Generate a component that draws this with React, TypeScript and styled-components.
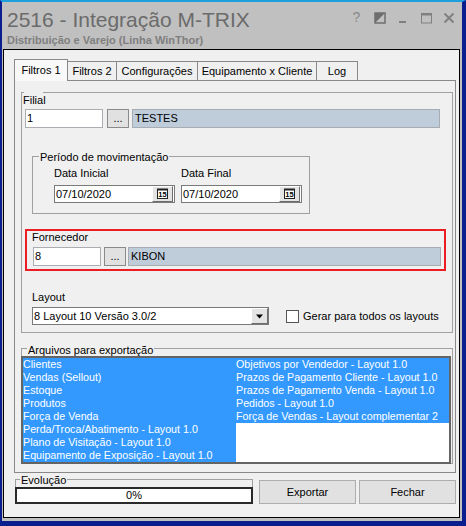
import React from 'react';
import styled, { createGlobalStyle } from 'styled-components';

const GlobalStyle = createGlobalStyle`
  html, body {
    margin: 0;
    padding: 0;
    background: #0b1e8e;
  }
  body {
    font-family: "Liberation Sans", Arial, sans-serif;
    font-size: 11px;
    color: #000;
  }
  * {
    box-sizing: border-box;
  }
`;

const Frame = styled.div`
  width: 466px;
  height: 526px;
  display: flex;
  flex-direction: column;
  background: #c0c0c0;
  border-style: solid;
  border-color: #0b1e8e;
  border-width: 0 4px 5px 2px;
  border-top: 2px solid #1c9fdb;
  padding: 0 2px 3px 1px;
`;

const TitleBar = styled.div`
  height: 47px;
  flex: none;
  display: flex;
  justify-content: space-between;
`;

const TitleBlock = styled.div`
  padding: 6px 0 0 4px;
`;

const Title = styled.div`
  font-size: 21px;
  line-height: 24px;
  color: #6b6b6b;
  white-space: nowrap;
`;

const Subtitle = styled.div`
  margin-top: 2px;
  font-size: 11px;
  font-weight: bold;
  line-height: 13px;
  color: #7f7f7f;
  white-space: nowrap;
`;

const Controls = styled.div`
  display: flex;
  padding-top: 9px;
`;

const ControlCell = styled.div`
  width: 23px;
  height: 13px;
  display: flex;
  align-items: center;
  justify-content: center;
  color: #8a8a8a;
  font-size: 14px;
  line-height: 13px;
`;

const Body = styled.div`
  flex: 1;
  display: flex;
  flex-direction: column;
  background: #f0f0f0;
  border: 1px solid #000;
  padding: 9px 3px 0 10px;
`;

const TabRow = styled.div`
  display: flex;
  align-items: flex-end;
  height: 21px;
`;

const Tab = styled.div<{ $w: number; $active?: boolean }>`
  position: relative;
  z-index: ${(p) => (p.$active ? 2 : 1)};
  width: ${(p) => p.$w}px;
  height: ${(p) => (p.$active ? 22 : 19)}px;
  margin-bottom: ${(p) => (p.$active ? -1 : 0)}px;
  display: flex;
  align-items: center;
  justify-content: center;
  line-height: 13px;
  white-space: nowrap;
  background: ${(p) => (p.$active ? '#f9f9f9' : '#f0f0f0')};
  border: 1px solid #898989;
  border-bottom: none;

  & + & {
    margin-left: -1px;
  }
`;

const Panel = styled.div`
  width: 442px;
  height: 393px;
  background: #f0f0f0;
  border: 1px solid #898989;
  padding: 0 1px 0 6px;
`;

const Group = styled.fieldset<{ $h?: number }>`
  margin: 11px 0 0 0;
  padding: 0;
  width: 432px;
  height: ${(p) => (p.$h ? `${p.$h}px` : 'auto')};
  border: 1px solid #a0a0a0;
  min-inline-size: 0;
`;

const GapLegend = styled.legend`
  width: 19px;
  height: 1px;
  margin-left: 2px;
  padding: 0;
`;

const Legend = styled.legend<{ $indent: number; $lift: number }>`
  margin-left: ${(p) => p.$indent}px;
  padding: ${(p) => p.$lift}px 1px 0 1px;
  font-size: 11px;
  line-height: 11px;
  white-space: nowrap;
`;

const Caption = styled.div<{ $top?: number; $left?: number }>`
  margin-top: ${(p) => p.$top ?? 0}px;
  margin-left: ${(p) => p.$left ?? 0}px;
  line-height: 13px;
  white-space: nowrap;
`;

const LookupRow = styled.div<{ $top: number; $left: number }>`
  display: flex;
  height: 19px;
  margin-top: ${(p) => p.$top}px;
  margin-left: ${(p) => p.$left}px;
`;

const CodeBox = styled.div<{ $w: number }>`
  width: ${(p) => p.$w}px;
  background: #fff;
  border: 1px solid #abadb3;
  padding-left: 1px;
  line-height: 17px;
`;

const DotsButton = styled.div<{ $gap: number }>`
  width: 22px;
  margin-left: ${(p) => p.$gap}px;
  background: #e1e1e1;
  border: 1px solid #8a8a8a;
  text-align: center;
  line-height: 17px;
`;

const DescBox = styled.div<{ $w: number; $gap: number }>`
  width: ${(p) => p.$w}px;
  margin-left: ${(p) => p.$gap}px;
  background: #bfcddb;
  border: 1px solid #a6acb2;
  padding-left: 2px;
  line-height: 17px;
`;

const PeriodSet = styled.fieldset`
  margin: 22px 0 0 10px;
  padding: 4px 0 10px 0;
  width: 278px;
  border: 1px solid #a0a0a0;
  min-inline-size: 0;
`;

const DateColumns = styled.div`
  display: flex;
  gap: 6px;
  padding-left: 21px;
`;

const DateField = styled.div`
  display: flex;
  flex-direction: column;
  gap: 5px;
`;

const DateBox = styled.div`
  width: 121px;
  height: 18px;
  display: flex;
  align-items: center;
  justify-content: space-between;
  background: #fff;
  border: 1px solid #7a7a7a;
  padding: 0 1px 0 1px;
  line-height: 16px;
`;

const RaisedButton = styled.div<{ $w: number }>`
  width: ${(p) => p.$w}px;
  height: 16px;
  display: flex;
  align-items: center;
  justify-content: center;
  background: #e4e4e4;
  border-style: solid;
  border-width: 1px;
  border-color: #fff #6d6d6d #6d6d6d #fff;
`;

const Highlight = styled.div`
  margin: 15px 0 0 3px;
  width: 421px;
  border: 2px solid #ec1c24;
  padding: 0 0 3px 5px;
`;

const LayoutRow = styled.div`
  display: flex;
  align-items: center;
  margin: 3px 0 0 10px;
`;

const SelectBox = styled.div`
  width: 237px;
  height: 18px;
  display: flex;
  align-items: center;
  justify-content: space-between;
  background: #fff;
  border: 1px solid #7a7a7a;
  padding-left: 1px;
  line-height: 16px;
`;

const CheckBox = styled.div`
  width: 13px;
  height: 13px;
  margin-left: 17px;
  background: #fff;
  border: 1px solid #555;
`;

const CheckLabel = styled.div`
  margin-left: 4px;
  line-height: 13px;
  white-space: nowrap;
`;

const FilesSet = styled.fieldset`
  margin: 8px 0 0 0;
  padding: 0;
  width: 432px;
  border: 1px solid #a0a0a0;
  min-inline-size: 0;
`;

const ListBox = styled.div`
  margin: 0 1px -1px -1px;
  display: grid;
  grid-template-columns: 213px 213px;
  grid-template-rows: repeat(8, 13px);
  grid-auto-flow: column;
  align-content: start;
  background: #fff;
  border: 2px solid #646464;
`;

const ListItem = styled.div`
  background: #3399ff;
  color: #fff;
  font-size: 10.7px;
  line-height: 13px;
  white-space: nowrap;
  overflow: hidden;
`;

const Footer = styled.div`
  display: flex;
  align-items: flex-end;
  margin-left: 1px;
`;

const ProgressSet = styled.fieldset`
  margin: 0;
  padding: 0;
  width: 238px;
  border: 1px solid #a0a0a0;
  min-inline-size: 0;
`;

const ProgressBar = styled.div`
  margin: 1px -1px -1px -1px;
  height: 17px;
  background: #fff;
  border: 2px solid #2a2a2a;
  text-align: center;
  line-height: 13px;
`;

const ActionButton = styled.div<{ $gap: number }>`
  width: 97px;
  height: 24px;
  margin-left: ${(p) => p.$gap}px;
  display: flex;
  align-items: center;
  justify-content: center;
  background: #e1e1e1;
  border: 1px solid #adadad;
`;

const tabs = [
  { label: 'Filtros 1', w: 54, active: true },
  { label: 'Filtros 2', w: 50 },
  { label: 'Configurações', w: 82 },
  { label: 'Equipamento x Cliente', w: 120 },
  { label: 'Log', w: 42 },
];

const exportFiles = [
  'Clientes',
  'Vendas (Sellout)',
  'Estoque',
  'Produtos',
  'Força de Venda',
  'Perda/Troca/Abatimento - Layout 1.0',
  'Plano de Visitação - Layout 1.0',
  'Equipamento de Exposição - Layout 1.0',
  'Objetivos por Vendedor - Layout 1.0',
  'Prazos de Pagamento Cliente - Layout 1.0',
  'Prazos de Pagamento Venda - Layout 1.0',
  'Pedidos - Layout 1.0',
  'Força de Vendas - Layout complementar 2',
];

const CalendarIcon = () => (
  <svg width="13" height="12" viewBox="0 0 13 12">
    <rect x="1.5" y="1.5" width="10" height="9" fill="#fff" stroke="#222" />
    <line x1="1" y1="1.5" x2="12" y2="1.5" stroke="#222" strokeWidth="2" />
    <text x="6.5" y="9" fontSize="7.5" fontWeight="bold" textAnchor="middle" fontFamily="Liberation Sans, Arial, sans-serif" fill="#000">
      15
    </text>
  </svg>
);

const DownArrow = () => (
  <svg width="9" height="5" viewBox="0 0 9 5">
    <polygon points="1,0.5 8,0.5 4.5,4.5" fill="#000" />
  </svg>
);

const ContextHelpIcon = () => (
  <svg width="12" height="12" viewBox="0 0 12 12">
    <rect x="1" y="1" width="10" height="10" fill="none" stroke="#6e6e6e" strokeWidth="1.5" />
    <polygon points="1,1 11,1 1,11" fill="#6e6e6e" />
  </svg>
);

const MinimizeIcon = () => (
  <svg width="12" height="12" viewBox="0 0 12 12">
    <rect x="2" y="9" width="7" height="2" fill="#808080" />
  </svg>
);

const MaximizeIcon = () => (
  <svg width="12" height="12" viewBox="0 0 12 12">
    <rect x="1.5" y="1.5" width="10" height="9.5" fill="none" stroke="#808080" />
    <rect x="1" y="1" width="11" height="2.5" fill="#808080" />
  </svg>
);

const CloseIcon = () => (
  <svg width="12" height="12" viewBox="0 0 12 12">
    <path d="M1.5 1.5 L10.5 10.5 M10.5 1.5 L1.5 10.5" stroke="#808080" strokeWidth="2" />
  </svg>
);

const App = () => {
  return (
    <>
      <GlobalStyle />
      <Frame>
        <TitleBar>
          <TitleBlock>
            <Title>2516 - Integração M-TRIX</Title>
            <Subtitle>Distribuição e Varejo (Linha WinThor)</Subtitle>
          </TitleBlock>
          <Controls>
            <ControlCell>?</ControlCell>
            <ControlCell><ContextHelpIcon /></ControlCell>
            <ControlCell><MinimizeIcon /></ControlCell>
            <ControlCell><MaximizeIcon /></ControlCell>
            <ControlCell><CloseIcon /></ControlCell>
          </Controls>
        </TitleBar>

        <Body>
          <TabRow>
            {tabs.map((t) => (
              <Tab key={t.label} $w={t.w} $active={t.active}>
                {t.label}
              </Tab>
            ))}
          </TabRow>

          <Panel>
            <Group $h={241}>
              <GapLegend />
              <Caption $top={1} $left={1}>Filial</Caption>
              <LookupRow $top={2} $left={3}>
                <CodeBox $w={78}>1</CodeBox>
                <DotsButton $gap={4}>...</DotsButton>
                <DescBox $w={308} $gap={3}>TESTES</DescBox>
              </LookupRow>

              <PeriodSet>
                <Legend $indent={6} $lift={2}>Período de movimentação</Legend>
                <DateColumns>
                  <DateField>
                    <Caption>Data Inicial</Caption>
                    <DateBox>
                      07/10/2020
                      <RaisedButton $w={21}><CalendarIcon /></RaisedButton>
                    </DateBox>
                  </DateField>
                  <DateField>
                    <Caption>Data Final</Caption>
                    <DateBox>
                      07/10/2020
                      <RaisedButton $w={21}><CalendarIcon /></RaisedButton>
                    </DateBox>
                  </DateField>
                </DateColumns>
              </PeriodSet>

              <Highlight>
                <Caption>Fornecedor</Caption>
                <LookupRow $top={3} $left={1}>
                  <CodeBox $w={68}>8</CodeBox>
                  <DotsButton $gap={3}>...</DotsButton>
                  <DescBox $w={313} $gap={2}>KIBON</DescBox>
                </LookupRow>
              </Highlight>

              <Caption $top={20} $left={10}>Layout</Caption>
              <LayoutRow>
                <SelectBox>
                  8 Layout 10 Versão 3.0/2
                  <RaisedButton $w={17}><DownArrow /></RaisedButton>
                </SelectBox>
                <CheckBox />
                <CheckLabel>Gerar para todos os layouts</CheckLabel>
              </LayoutRow>
            </Group>

            <FilesSet>
              <Legend $indent={5} $lift={4}>Arquivos para exportação</Legend>
              <ListBox>
                {exportFiles.map((f) => (
                  <ListItem key={f}>{f}</ListItem>
                ))}
              </ListBox>
            </FilesSet>
          </Panel>

          <Footer>
            <ProgressSet>
              <Legend $indent={4} $lift={2}>Evolução</Legend>
              <ProgressBar>0%</ProgressBar>
            </ProgressSet>
            <ActionButton $gap={6}>Exportar</ActionButton>
            <ActionButton $gap={3}>Fechar</ActionButton>
          </Footer>
        </Body>
      </Frame>
    </>
  );
};

export default App;
